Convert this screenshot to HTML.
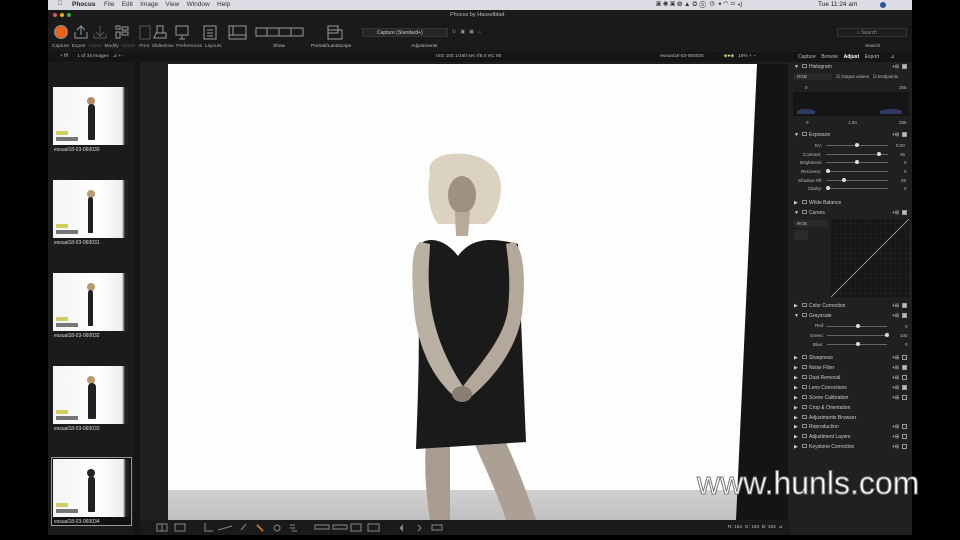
<!DOCTYPE html>
<html><head><meta charset="utf-8"><style>
*{margin:0;padding:0;box-sizing:border-box}
body{width:960px;height:540px;background:#000;position:relative;overflow:hidden;font-family:"Liberation Sans",sans-serif;color:#aaa}
.a{position:absolute}
.t{position:absolute;font-size:5px;color:#bbb;white-space:nowrap}
.thumb{position:absolute;left:53px;width:75px;height:58px;background:linear-gradient(90deg,#f4f4f4 0,#fff 60%,#eee 92%,#222 96%)}
.thumb .fig{position:absolute;left:35px;top:17px;width:7px;height:36px;background:#222;border-radius:4px 4px 1px 1px}
.thumb .head{position:absolute;left:34px;top:10px;width:8px;height:8px;background:#b89a70;border-radius:50%}
.thumb .y{position:absolute;left:3px;top:44px;width:12px;height:4px;background:#cfcf60}
.thumb .g{position:absolute;left:3px;top:50px;width:22px;height:4px;background:#777}
.lbl{position:absolute;left:54px;font-size:5px;color:#ddd}
.row{position:absolute;left:794px;width:116px;height:10px;font-size:5px;color:#ccc}
.row .tri{position:absolute;left:0;top:2px;font-size:5px}
.row .nm{position:absolute;left:15px;top:2px}
.row .ic{position:absolute;left:8px;top:2px;width:5px;height:4px;border:1px solid #888}
.row .cb{position:absolute;left:108px;top:2px;width:5px;height:5px;border:1px solid #999}
.row .cb.on{background:#bbb}
.row .pl{position:absolute;left:98px;top:2px}
.sl{position:absolute;height:1px;background:#666}
.kn{position:absolute;width:4px;height:4px;border-radius:50%;background:#ddd}
</style></head><body>
<div class="a" style="left:48px;top:0;width:864px;height:10px;background:#dcdce4"></div>
<div class="t" style="left:58px;top:1px;color:#222;font-size:6px">&#63743;</div>
<div class="t" style="left:72px;top:1px;color:#222;font-size:6.5px;font-weight:bold">Phocus</div>
<div class="t" style="left:104px;top:1px;color:#333;font-size:6.5px">File&nbsp;&nbsp;&nbsp;&nbsp;Edit&nbsp;&nbsp;&nbsp;&nbsp;Image&nbsp;&nbsp;&nbsp;&nbsp;View&nbsp;&nbsp;&nbsp;&nbsp;Window&nbsp;&nbsp;&nbsp;&nbsp;Help</div>
<div class="t" style="left:818px;top:1px;color:#222;font-size:6.5px">Tue 11:24 am</div>
<div class="t" style="left:656px;top:1px;color:#333;font-size:6.5px">▣ ◉ ▣ ◍ ▲ ◎ ⓑ &nbsp;◷ &nbsp;ꔷ ◠ ▭ ◂)</div>
<div class="a" style="left:880px;top:2px;width:6px;height:6px;border-radius:50%;background:#3050a0"></div>
<div class="a" style="left:48px;top:10px;width:864px;height:42px;background:#1a1a1a"></div>
<div class="a" style="left:53px;top:13px;width:4px;height:4px;border-radius:50%;background:#e05a4a"></div>
<div class="a" style="left:60px;top:13px;width:4px;height:4px;border-radius:50%;background:#e0b030"></div>
<div class="a" style="left:67px;top:13px;width:4px;height:4px;border-radius:50%;background:#40b040"></div>
<div class="t" style="left:450px;top:12px;font-size:5.5px;color:#bbb">Phocus by Hasselblad</div>
<div class="a" style="left:54px;top:25px;width:14px;height:14px;border-radius:50%;background:#e8631c;border:1px solid #888"></div>
<svg class="a" style="left:70px;top:22px" width="300" height="20" fill="none" stroke="#999" stroke-width="1">
<path d="M7 8l4-4 4 4M11 4v9M5 10v6h12v-6"/>
<path d="M30 4v9M26 10l4 4 4-4M24 12v4h12v-4" stroke="#555"/>
<rect x="46" y="4" width="4" height="3"/><rect x="52" y="5" width="6" height="3"/><rect x="52" y="10" width="6" height="3"/><rect x="46" y="10" width="4" height="6"/>
<rect x="70" y="4" width="10" height="13" stroke="#555"/>
<path d="M84 16h12v-5h-10z M87 11v-7h6v7"/>
<rect x="106" y="4" width="12" height="9"/><path d="M112 13v4M109 17h6"/>
<rect x="134" y="4" width="12" height="13"/><path d="M137 8h6M137 11h6M137 14h6"/>
<rect x="159" y="4" width="17" height="13"/><path d="M159 13h17M163 4v9"/>
<rect x="186" y="6" width="47" height="8"/><path d="M197 6v8M209 6v8M221 6v8"/>
<rect x="258" y="4" width="10" height="7"/><rect x="258" y="8" width="14" height="9"/>
</svg>
<div class="t" style="left:52px;top:44px;font-size:4.8px;color:#aaa">Capture&nbsp; Export&nbsp; <span style="color:#555">Import</span>&nbsp; Modify&nbsp; <span style="color:#555">Delete</span>&nbsp;&nbsp; Print&nbsp; Slideshow&nbsp; Preferences&nbsp; Layouts</div>
<div class="t" style="left:273px;top:44px;font-size:4.8px">Show</div>
<div class="t" style="left:311px;top:44px;font-size:4.8px">Portrait/Landscape</div>
<div class="t" style="left:411px;top:44px;font-size:4.8px">Adjustments</div>
<div class="a" style="left:362px;top:28px;width:86px;height:9px;background:#262626;border:1px solid #333"></div>
<div class="t" style="left:377px;top:30px;font-size:5px;color:#ccc">Capture (Standard+)</div>
<div class="t" style="left:452px;top:29px;font-size:5px;color:#999">↻&nbsp;&nbsp; ▣&nbsp;&nbsp; ▣&nbsp;&nbsp; ⌂</div>
<div class="a" style="left:837px;top:28px;width:70px;height:9px;background:#1e1e1e;border:1px solid #333"></div>
<div class="t" style="left:857px;top:30px;font-size:5px;color:#888">⌕ Search</div>
<div class="t" style="left:865px;top:44px;font-size:4.8px">Search</div>
<div class="a" style="left:48px;top:52px;width:864px;height:10px;background:#151515"></div>
<div class="t" style="left:60px;top:54px;font-size:4.8px">× fff&nbsp;&nbsp;&nbsp;&nbsp;&nbsp;&nbsp; 1 of 34 images&nbsp;&nbsp; ⊿ + -</div>
<div class="t" style="left:436px;top:54px;font-size:4.8px">ISO 100 1/160 sec f/8.0 HC 80</div>
<div class="t" style="left:660px;top:54px;font-size:4.8px">essual18-03-060034&nbsp;&nbsp;&nbsp; <span style="color:#444">· · · · ·</span> <span style="color:#aa8">◆</span><span style="color:#ee4">●</span><span style="color:#aa8">◆</span>&nbsp;&nbsp; 16% + −</div>
<div class="t" style="left:798px;top:54px;font-size:5px">Capture&nbsp;&nbsp;&nbsp; Browse&nbsp;&nbsp;&nbsp; <b style="color:#fff">Adjust</b>&nbsp;&nbsp;&nbsp; Export&nbsp;&nbsp;&nbsp;&nbsp;&nbsp;&nbsp;&nbsp; ⊿</div>
<div class="a" style="left:48px;top:62px;width:92px;height:473px;background:#1b1b1b"></div>
<div class="a" style="left:134px;top:62px;width:6px;height:473px;background:#141414"></div>
<div class="thumb" style="top:87px"><div class="head" style="background:#b0906a"></div><div class="fig"></div><div class="y"></div><div class="g"></div></div>
<div class="lbl" style="top:147px">essual18-03-060030</div>
<div class="thumb" style="top:180px"><div class="head"></div><div class="fig" style="width:5px"></div><div class="y"></div><div class="g"></div></div>
<div class="lbl" style="top:240px">essual18-03-060031</div>
<div class="thumb" style="top:273px"><div class="head"></div><div class="fig" style="width:5px"></div><div class="y"></div><div class="g"></div></div>
<div class="lbl" style="top:333px">essual18-03-060032</div>
<div class="thumb" style="top:366px"><div class="head"></div><div class="fig" style="width:8px"></div><div class="y"></div><div class="g"></div></div>
<div class="lbl" style="top:426px">essual18-03-060033</div>
<div class="a" style="left:51px;top:457px;width:81px;height:69px;border:1px solid #999;background:#111"></div>
<div class="thumb" style="top:459px;left:53px;width:76px"><div class="head" style="background:#222"></div><div class="fig"></div><div class="y"></div><div class="g"></div></div>
<div class="lbl" style="top:519px">essual18-03-060034</div>
<div class="a" style="left:140px;top:62px;width:650px;height:458px;background:#1e1e1e"></div>
<div class="a" style="left:168px;top:64px;width:620px;height:456px;background:#fdfdfd"></div>
<div class="a" style="left:168px;top:490px;width:570px;height:30px;background:linear-gradient(#d0d0d0,#c0c0c0)"></div>
<svg class="a" style="left:168px;top:64px" width="620" height="456">
<polygon points="589,0 620,0 620,456 568,456" fill="#141414"/>
<!-- hair -->
<path d="M262 110 C258 95 275 88 297 90 C318 92 334 105 333 125 C332 140 328 152 318 160 L270 160 C262 150 258 130 262 110Z" fill="#dcd2c0"/>
<ellipse cx="294" cy="131" rx="14" ry="19" fill="#a09080"/>
<path d="M287 148 L302 148 L300 172 L288 172 Z" fill="#b8aa9a"/>
<!-- legs -->
<path d="M258 380 L282 380 L282 456 L262 456 C258 430 256 405 258 380Z" fill="#a89c90"/>
<path d="M305 376 L335 372 C348 400 360 430 368 456 L338 456 C330 430 315 400 305 376Z" fill="#aca094"/>
<!-- dress -->
<path d="M252 180 C262 172 278 176 290 192 C302 176 318 172 350 180 L352 230 C354 280 356 330 358 378 L248 385 C250 330 252 280 250 230 Z" fill="#1a1a1a"/>
<!-- arms -->
<path d="M252 178 C242 185 244 215 246 245 C250 285 266 315 286 332 L296 324 C280 300 266 270 262 235 C259 210 262 190 262 180Z" fill="#bbb0a4"/>
<path d="M346 178 C356 186 358 215 354 250 C350 280 330 310 304 332 L292 326 C312 300 336 275 340 245 C343 215 340 195 338 180Z" fill="#b3a89a"/>
<ellipse cx="294" cy="330" rx="10" ry="8" fill="#8a7e72"/>
</svg>
<div class="a" style="left:140px;top:520px;width:650px;height:15px;background:#1a1a1a"></div>
<svg class="a" style="left:150px;top:520px" width="300" height="15" fill="none" stroke="#888" stroke-width="1">
<rect x="7" y="4" width="10" height="7"/><path d="M12 4v7"/><rect x="25" y="4" width="10" height="7"/>
<path d="M55 3v8h8"/><path d="M68 10l14-4"/><path d="M91 10l5-6"/><path d="M107 5l6 6" stroke="#c06a20" stroke-width="2"/>
<circle cx="127" cy="8" r="3"/><path d="M140 5h5M140 8h5M142 11h5"/>
<rect x="165" y="5" width="14" height="4"/><rect x="183" y="5" width="14" height="4"/><rect x="201" y="4" width="10" height="7"/><rect x="218" y="4" width="11" height="7"/>
<path d="M253 5l-3 3 3 3" fill="#888"/><path d="M268 5l3 3-3 3"/><rect x="282" y="5" width="10" height="5"/>
</svg>
<div class="t" style="left:728px;top:525px;font-size:4.8px">R: 184&nbsp; G: 184&nbsp; B: 184&nbsp; ⊿</div>
<div class="a" style="left:790px;top:62px;width:122px;height:473px;background:#202020"></div>
<div class="row" style="top:62px"><span class="tri">▼</span><span class="ic"></span><span class="nm">Histogram</span><span class="pl">+⊞</span><span class="cb on"></span></div>
<div class="a" style="left:794px;top:73px;width:38px;height:7px;background:#2a2a2a"></div>
<div class="t" style="left:797px;top:74px;font-size:4.5px">RGB</div>
<div class="t" style="left:836px;top:74px;font-size:4.5px">☑ Output values&nbsp;&nbsp; ☑ Endpoints</div>
<div class="t" style="left:805px;top:85px;font-size:4.5px">0</div><div class="t" style="left:899px;top:85px;font-size:4.5px">255</div>
<div class="a" style="left:793px;top:92px;width:116px;height:24px;background:#151515"></div>
<div class="a" style="left:797px;top:109px;width:18px;height:5px;background:#2c3a64;border-radius:50% 50% 0 0"></div>
<div class="a" style="left:880px;top:109px;width:22px;height:5px;background:#2c3a64;border-radius:50% 50% 0 0"></div>
<div class="t" style="left:806px;top:120px;font-size:4.5px">0</div><div class="t" style="left:848px;top:120px;font-size:4.5px">1.00</div><div class="t" style="left:899px;top:120px;font-size:4.5px">255</div>
<div class="row" style="top:130px"><span class="tri">▼</span><span class="ic"></span><span class="nm">Exposure</span><span class="pl">+⊞</span><span class="cb on"></span></div>
<div class="t" style="left:815px;top:143px;font-size:4.5px">EV:</div><div class="sl" style="left:826px;top:145px;width:62px"></div><div class="kn" style="left:855px;top:143px"></div><div class="t" style="left:896px;top:143px;font-size:4.5px">0.00</div>
<div class="t" style="left:803px;top:152px;font-size:4.5px">Contrast:</div><div class="sl" style="left:826px;top:154px;width:62px"></div><div class="kn" style="left:877px;top:152px"></div><div class="t" style="left:900px;top:152px;font-size:4.5px">36</div>
<div class="t" style="left:800px;top:160px;font-size:4.5px">Brightness:</div><div class="sl" style="left:826px;top:162px;width:62px"></div><div class="kn" style="left:855px;top:160px"></div><div class="t" style="left:904px;top:160px;font-size:4.5px">0</div>
<div class="t" style="left:801px;top:169px;font-size:4.5px">Recovery:</div><div class="sl" style="left:826px;top:171px;width:62px"></div><div class="kn" style="left:826px;top:169px"></div><div class="t" style="left:904px;top:169px;font-size:4.5px">0</div>
<div class="t" style="left:798px;top:178px;font-size:4.5px">Shadow Fill:</div><div class="sl" style="left:826px;top:180px;width:62px"></div><div class="kn" style="left:842px;top:178px"></div><div class="t" style="left:901px;top:178px;font-size:4.5px">26</div>
<div class="t" style="left:808px;top:186px;font-size:4.5px">Clarity:</div><div class="sl" style="left:826px;top:188px;width:62px"></div><div class="kn" style="left:826px;top:186px"></div><div class="t" style="left:904px;top:186px;font-size:4.5px">0</div>
<div class="row" style="top:198px"><span class="tri">▶</span><span class="ic"></span><span class="nm">White Balance</span></div>
<div class="row" style="top:208px"><span class="tri">▼</span><span class="ic"></span><span class="nm">Curves</span><span class="pl">+⊞</span><span class="cb on"></span></div>
<div class="a" style="left:794px;top:220px;width:33px;height:7px;background:#2a2a2a"></div><div class="t" style="left:797px;top:221px;font-size:4.5px">RGB</div>
<div class="a" style="left:794px;top:230px;width:14px;height:10px;background:#2a2a2a"></div>
<svg class="a" style="left:831px;top:219px" width="78" height="78"><defs><pattern id="p" width="5" height="5" patternUnits="userSpaceOnUse"><path d="M5 0V5H0" fill="none" stroke="#2c2c2c" stroke-width=".6"/></pattern></defs><rect width="78" height="78" fill="#161616"/><rect width="78" height="78" fill="url(#p)"/><line x1="0" y1="78" x2="78" y2="0" stroke="#bbb" stroke-width=".7"/></svg>
<div class="row" style="top:301px"><span class="tri">▶</span><span class="ic"></span><span class="nm">Color Correction</span><span class="pl">+⊞</span><span class="cb on"></span></div>
<div class="row" style="top:311px"><span class="tri">▼</span><span class="ic"></span><span class="nm">Grayscale</span><span class="pl">+⊞</span><span class="cb on"></span></div>
<div class="t" style="left:815px;top:323px;font-size:4.5px">Red:</div><div class="sl" style="left:827px;top:326px;width:60px"></div><div class="kn" style="left:856px;top:324px"></div><div class="t" style="left:905px;top:324px;font-size:4.5px">0</div>
<div class="t" style="left:810px;top:333px;font-size:4.5px">Green:</div><div class="sl" style="left:827px;top:335px;width:60px"></div><div class="kn" style="left:885px;top:333px"></div><div class="t" style="left:900px;top:333px;font-size:4.5px">100</div>
<div class="t" style="left:813px;top:342px;font-size:4.5px">Blue:</div><div class="sl" style="left:827px;top:344px;width:60px"></div><div class="kn" style="left:856px;top:342px"></div><div class="t" style="left:905px;top:342px;font-size:4.5px">0</div>
<div class="row" style="top:353px"><span class="tri">▶</span><span class="ic"></span><span class="nm">Sharpness</span><span class="pl">+⊞</span><span class="cb"></span></div>
<div class="row" style="top:363px"><span class="tri">▶</span><span class="ic"></span><span class="nm">Noise Filter</span><span class="pl">+⊞</span><span class="cb on"></span></div>
<div class="row" style="top:373px"><span class="tri">▶</span><span class="ic"></span><span class="nm">Dust Removal</span><span class="pl">+⊞</span><span class="cb"></span></div>
<div class="row" style="top:383px"><span class="tri">▶</span><span class="ic"></span><span class="nm">Lens Corrections</span><span class="pl">+⊞</span><span class="cb on"></span></div>
<div class="row" style="top:393px"><span class="tri">▶</span><span class="ic"></span><span class="nm">Scene Calibration</span><span class="pl">+⊞</span><span class="cb"></span></div>
<div class="row" style="top:403px"><span class="tri">▶</span><span class="ic"></span><span class="nm">Crop &amp; Orientation</span></div>
<div class="row" style="top:413px"><span class="tri">▶</span><span class="ic"></span><span class="nm">Adjustments Browser</span></div>
<div class="row" style="top:422px"><span class="tri">▶</span><span class="ic"></span><span class="nm">Reproduction</span><span class="pl">+⊞</span><span class="cb"></span></div>
<div class="row" style="top:432px"><span class="tri">▶</span><span class="ic"></span><span class="nm">Adjustment Layers</span><span class="pl">+⊞</span><span class="cb"></span></div>
<div class="row" style="top:442px"><span class="tri">▶</span><span class="ic"></span><span class="nm">Keystone Correction</span><span class="pl">+⊞</span><span class="cb"></span></div>
<div class="a" style="left:697px;top:465px;font-size:32px;color:#fff;-webkit-text-stroke:1px #777;font-family:'Liberation Sans',sans-serif;white-space:nowrap">www.hunls.com</div>
</body></html>
